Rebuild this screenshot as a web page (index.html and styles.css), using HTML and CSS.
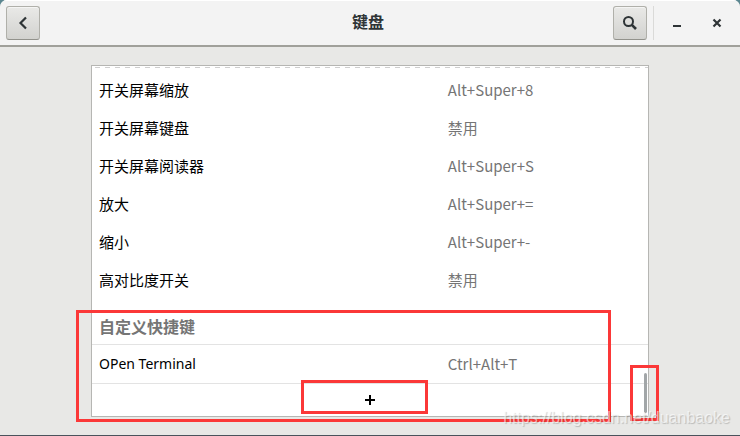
FILE: index.html
```
<!DOCTYPE html>
<html lang="zh-CN">
<head>
    <meta charset="UTF-8">
    <meta name="viewport" content="width=device-width, initial-scale=1.0">
    <title>键盘</title>
    <link rel="stylesheet" href="styles.css">
</head>
<body>
    <div class="window">
        <header class="titlebar">
            <button class="btn" type="button" aria-label="返回">
                <svg width="16" height="16" viewBox="0 0 16 16"><path d="M11 2.500L5.500 8l5.500 5.500" fill="none" stroke="#2e3436" stroke-width="2.200"/></svg>
            </button>
            <h1 class="title">键盘</h1>
            <div class="controls">
                <button class="btn" type="button" aria-label="搜索">
                    <svg width="16" height="16" viewBox="0 0 16 16"><circle cx="6.500" cy="6.500" r="4.500" fill="none" stroke="#2e3436" stroke-width="2"/><path d="M9.800 9.800L14 14" stroke="#2e3436" stroke-width="2.600"/></svg>
                </button>
                <span class="divider"></span>
                <button class="wm" type="button" aria-label="最小化">
                    <svg width="16" height="16" viewBox="0 0 16 16"><path d="M4 10h8v2H4z" fill="#2e3436"/></svg>
                </button>
                <button class="wm" type="button" aria-label="关闭">
                    <svg width="16" height="16" viewBox="0 0 16 16"><path d="M4.500 4.500l7 7M11.500 4.500l-7 7" stroke="#2e3436" stroke-width="2.200"/></svg>
                </button>
            </div>
        </header>
        <main class="content">
            <div class="panel">
                <div class="undershoot"></div>
                <table class="shortcuts">
                    <tbody>
                        <tr><td class="name">开关屏幕缩放</td><td class="key">Alt+Super+8</td></tr>
                        <tr><td class="name">开关屏幕键盘</td><td class="key">禁用</td></tr>
                        <tr><td class="name">开关屏幕阅读器</td><td class="key">Alt+Super+S</td></tr>
                        <tr><td class="name">放大</td><td class="key">Alt+Super+=</td></tr>
                        <tr><td class="name">缩小</td><td class="key">Alt+Super+-</td></tr>
                        <tr><td class="name">高对比度开关</td><td class="key">禁用</td></tr>
                    </tbody>
                    <tbody class="custom">
                        <tr><th class="section" colspan="2">自定义快捷键</th></tr>
                        <tr><td class="name latin">OPen Terminal</td><td class="key">Ctrl+Alt+T</td></tr>
                    </tbody>
                </table>
                <button class="add" type="button" aria-label="添加">
                    <svg width="16" height="16" viewBox="0 0 16 16"><path d="M3 7h4V3h2v4h4v2H9v4H7V9H3z" fill="#000"/></svg>
                </button>
                <span class="scrollbar"></span>
                <span class="mark mark-custom"></span>
                <span class="mark mark-add"></span>
                <span class="mark mark-scroll"></span>
            </div>
        </main>
        <span class="watermark">https://blog.csdn.net/duanbaoke</span>
    </div>
</body>
</html>
```
FILE: styles.css
```
* {
    box-sizing: border-box;
}
html {
    background: #5c8791;
}
body {
    margin: 0;
    font-family: "Noto Sans", "Noto Sans CJK SC", sans-serif;
    font-size: 15px;
    color: #000;
}
.window {
    position: relative;
    min-height: 100vh;
    background: #e8e8e6;
    border-bottom: 1px solid #4a535c;
    border-radius: 7px 7px 0 0;
    overflow: hidden;
}
.titlebar {
    display: grid;
    grid-template-columns: 1fr auto 1fr;
    align-items: center;
    height: 47px;
    padding: 0 6px;
    background: #f3f3f3;
    border-top: 1px solid #fff;
    border-bottom: 2px solid #a0a09a;
}
.title {
    margin: 0;
    padding: 0 4px 2px 0;
    font-size: 16px;
    line-height: 20px;
    color: #2e3436;
}
.btn,
.wm,
.add {
    display: flex;
    align-items: center;
    justify-content: center;
    padding: 0;
    border: 0;
    background: none;
}
.btn {
    width: 34px;
    height: 34px;
    border: 1px solid #b0b0aa;
    border-bottom-color: #92928c;
    border-radius: 3px;
    background: linear-gradient(#e9e9e7, #d2d2cf);
    box-shadow: inset 0 1px #f5f5f4;
}
.controls {
    display: flex;
    align-items: center;
    justify-content: flex-end;
}
.divider {
    width: 1px;
    height: 34px;
    margin: 0 6px;
    background: #dadad8;
}
.wm {
    width: 34px;
    height: 34px;
}
.wm + .wm {
    margin-left: 6px;
}
.content {
    padding: 18px 91px;
}
.panel {
    position: relative;
    padding-top: 1px;
    background: #fff;
    border: 1px solid #b6b6b3;
}
.undershoot {
    height: 1px;
    margin: 0 0 3px 3px;
    background: repeating-linear-gradient(90deg, #cfcfcf 0 5px, transparent 5px 10px);
}
.shortcuts {
    width: 100%;
    table-layout: fixed;
    border-spacing: 0;
    line-height: 20px;
}
.shortcuts td {
    height: 38px;
    padding: 0;
}
.shortcuts .name {
    width: 64%;
    padding-left: 7px;
}
.key {
    font-family: "Noto Sans CJK SC", sans-serif;
    color: #757575;
}
.latin {
    font-size: 14px;
}
.shortcuts .section {
    height: 46px;
    padding: 10px 0 0 7px;
    border-bottom: 1px solid #e3e3e3;
    font-size: 16px;
    text-align: left;
    color: #757575;
}
.custom td {
    height: 39px;
    border-bottom: 1px solid #e3e3e3;
}
.add {
    width: 100%;
    height: 32px;
}
.scrollbar {
    position: absolute;
    right: 1px;
    bottom: 3px;
    width: 3px;
    height: 40px;
    border-radius: 2px;
    background: #a2a6a8;
}
.mark {
    position: absolute;
    border: 3px solid #fb3838;
    pointer-events: none;
}
.mark-custom {
    left: -16px;
    right: 37px;
    bottom: -6px;
    height: 112px;
}
.mark-add {
    left: calc(50% - 69px);
    bottom: 2px;
    width: 127px;
    height: 34px;
}
.mark-scroll {
    right: -11px;
    bottom: -5px;
    width: 29px;
    height: 56px;
}
.watermark {
    position: absolute;
    right: 10px;
    bottom: 5px;
    font-family: "Liberation Sans", sans-serif;
    font-size: 16px;
    line-height: 24px;
    color: rgba(255, 255, 255, 0.6);
    text-shadow: 1px 1px 1px rgba(0, 0, 0, 0.2);
}
```
